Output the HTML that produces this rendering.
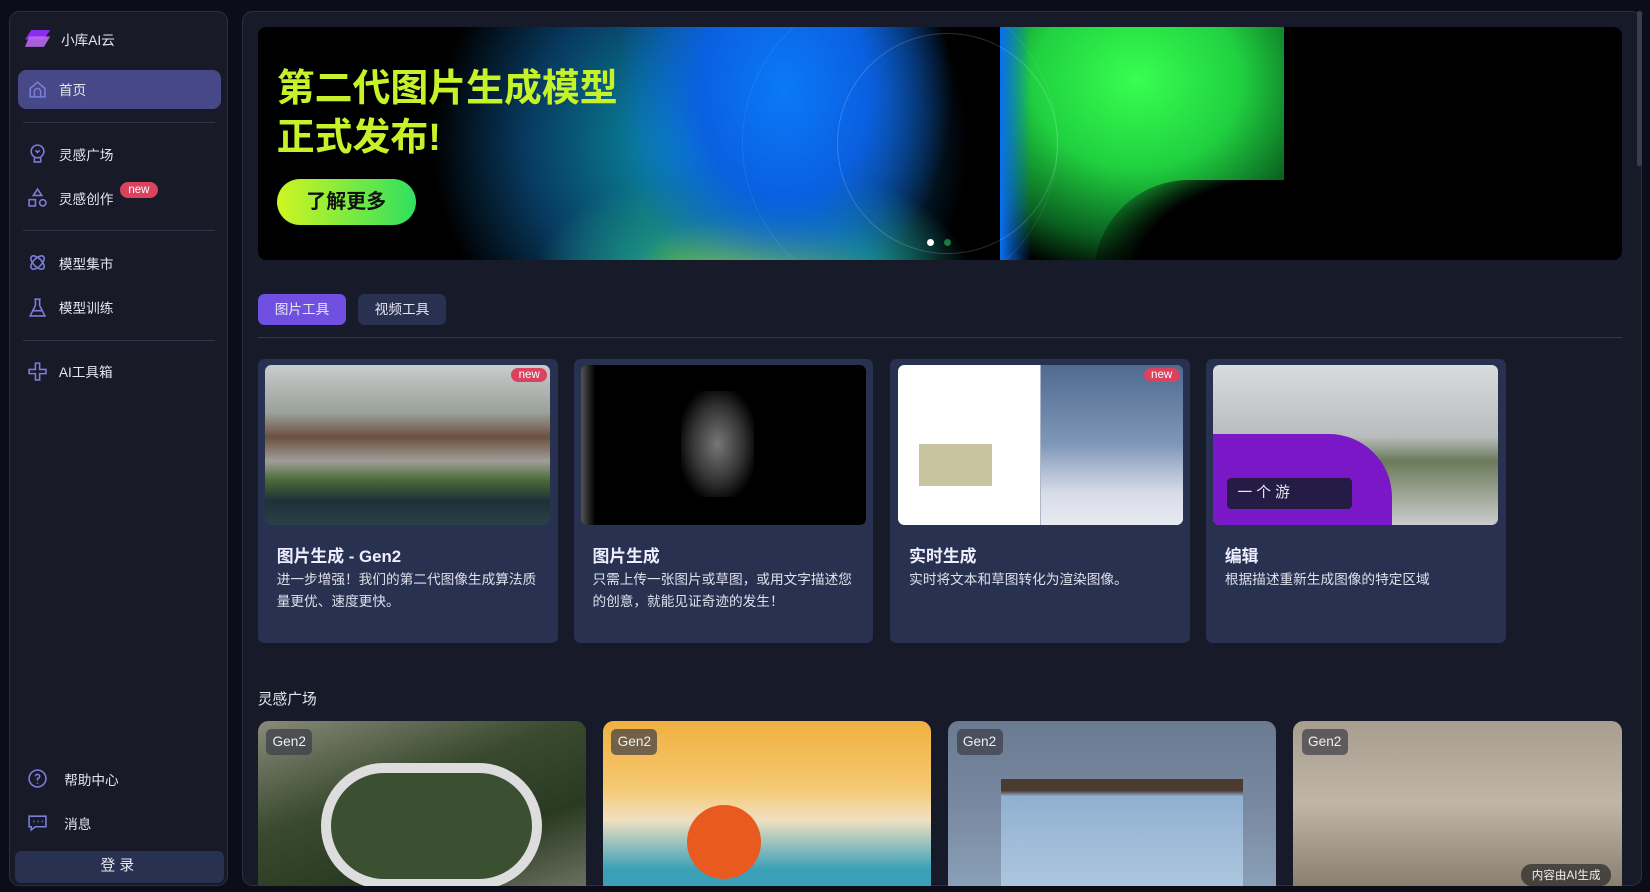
<!DOCTYPE html>
<html><head><meta charset="utf-8"><style>
*{box-sizing:border-box;margin:0;padding:0}
html,body{width:1650px;height:892px;overflow:hidden;background:#0b0d18}
#root{zoom:1.0523;position:relative;width:1568px;height:848px;font-family:"Liberation Sans","Noto Sans CJK SC",sans-serif;color:#e6e8f0}
.abs{position:absolute}
.side{left:9px;top:10px;width:208px;height:832px;background:#181a28;border:1px solid #2c2f44;border-radius:10px}
.nav{position:absolute;left:16px;font-size:13px;color:#e2e4ee;display:flex;align-items:center}
.nav svg{margin-right:10px}
.hr{position:absolute;left:22px;width:182px;height:1px;background:#303346}
.main{left:230px;top:10px;width:1330px;height:832px;background:#171a29;border:1px solid #2c2f44;border-radius:10px;overflow:hidden}
.card{position:absolute;top:341px;width:285px;height:270px;background:#283150;border-radius:6px}
.card .img{position:absolute;left:7px;top:6px;width:271px;height:152px;border-radius:6px;overflow:hidden}
.card h3{position:absolute;left:18px;top:174px;font-size:16px;font-weight:bold;color:#eef}
.card p{position:absolute;left:18px;top:200px;width:258px;font-size:13px;line-height:21px;color:#dde0ea}
.new{position:absolute;right:3px;top:3px;background:#d9435e;color:#fff;font-size:11px;padding:1px 7px;border-radius:9px}
.gal{position:absolute;top:685px;width:312px;height:157px;border-radius:10px 10px 0 0;overflow:hidden}
.gen{position:absolute;left:8px;top:8px;background:rgba(60,60,70,.7);color:#eee;font-size:13px;padding:5px 6px;border-radius:5px}
</style></head><body><div id="root">
<div class="abs side">
  <svg class="abs" style="left:14px;top:18px" width="26" height="18"><polygon points="6,0 24,0 18,9 0,9" fill="#8b2cf0"/><polygon points="4,6 24,6 18,16 0,16" fill="#c06cf8" opacity=".85"/></svg>
  <div class="abs" style="left:48px;top:17px;font-size:13px">小库AI云</div>
  <div class="abs" style="left:7px;top:56px;width:193px;height:37px;background:#474887;border-radius:8px"></div>
  <div class="nav" style="top:64px"><svg width="20" height="20" fill="none" stroke="#7b7ed8" stroke-width="1.5"><path d="M3 9L10 3l7 6v8H3z"/><path d="M7 17v-5a3 3 0 0 1 6 0v5"/></svg>首页</div>
  <div class="hr" style="top:105px;left:12px"></div>
  <div class="nav" style="top:125px"><svg width="20" height="20" fill="none" stroke="#7b7ed8" stroke-width="1.5"><circle cx="10" cy="8" r="6"/><path d="M7 14v4h6v-4M8 7l2 2 2-2"/></svg>灵感广场</div>
  <div class="nav" style="top:167px"><svg width="20" height="20" fill="none" stroke="#7b7ed8" stroke-width="1.5"><path d="M10 2l4 6H6z"/><rect x="2" y="12" width="6" height="6"/><circle cx="15" cy="15" r="3"/></svg>灵感创作</div>
  <div class="abs" style="left:104px;top:162px;background:#d9435e;color:#fff;font-size:11px;padding:2px 8px;border-radius:9px">new</div>
  <div class="hr" style="top:208px;left:12px"></div>
  <div class="nav" style="top:229px"><svg width="20" height="20" fill="none" stroke="#7b7ed8" stroke-width="1.5"><ellipse cx="10" cy="10" rx="8" ry="4" transform="rotate(45 10 10)"/><ellipse cx="10" cy="10" rx="8" ry="4" transform="rotate(-45 10 10)"/></svg>模型集市</div>
  <div class="nav" style="top:271px"><svg width="20" height="20" fill="none" stroke="#7b7ed8" stroke-width="1.5"><path d="M7 2h6M8 2v6L3 18h14L12 8V2M5 13h10"/></svg>模型训练</div>
  <div class="hr" style="top:312px;left:12px"></div>
  <div class="nav" style="top:332px"><svg width="20" height="20" fill="none" stroke="#7b7ed8" stroke-width="1.5"><path d="M8 2h4v6h6v4h-6v6H8v-6H2V8h6z"/></svg>AI工具箱</div>
  <div class="nav" style="top:719px"><svg width="20" height="20" fill="none" stroke="#7b7ed8" stroke-width="1.5"><circle cx="10" cy="10" r="8"/><path d="M8 8a2 2 0 1 1 2 2v2M10 14v1"/></svg><span style="margin-left:5px">帮助中心</span></div>
  <div class="nav" style="top:761px"><svg width="20" height="20" fill="none" stroke="#7b7ed8" stroke-width="1.5"><path d="M2 4h16v10H8l-4 3v-3H2z"/><path d="M6 9h1M10 9h1M14 9h1"/></svg><span style="margin-left:5px">消息</span></div>
  <div class="abs" style="left:4px;top:798px;width:199px;height:30px;background:#283150;border-radius:6px;text-align:center;line-height:30px;font-size:14px;letter-spacing:4px">登录</div>
</div>
<div class="abs main"></div>
<div class="abs" style="left:1556px;top:10px;width:4px;height:148px;background:#3a3d50;border-radius:2px"></div>
<div class="abs" style="left:245px;top:26px;width:1296px;height:221px;background:#000;border-radius:8px;overflow:hidden">
  <div class="abs" style="left:0;top:0;width:975px;height:221px;background:radial-gradient(ellipse 200px 260px at 500px 60px,#0a7af8 0%,#0a60e0 40%,transparent 80%),radial-gradient(ellipse 260px 140px at 470px 240px,#a8e020 0%,#1a8a80 45%,transparent 80%),radial-gradient(ellipse 300px 280px at 420px 110px,#0aa0b0 0%,#083a60 55%,transparent 85%),#000"></div>
  <div class="abs" style="left:705px;top:0;width:270px;height:221px;background:radial-gradient(ellipse 220px 190px at 130px 50px,#38ff50 0%,#20d040 45%,#0a6020 80%,#000 100%)"></div>
  <div class="abs" style="left:705px;top:0;width:30px;height:221px;background:linear-gradient(90deg,#0a70f0,transparent)"></div>
  <div class="abs" style="left:795px;top:145px;width:180px;height:90px;background:radial-gradient(ellipse 200px 130px at 180px 90px,#000 70%,transparent 100%);border-radius:100px 0 0 0"></div>
  <div class="abs" style="left:550px;top:5px;width:210px;height:210px;border:1px solid rgba(255,255,255,.18);border-radius:50%"></div>
  <div class="abs" style="left:460px;top:-40px;width:300px;height:300px;border:1px solid rgba(255,255,255,.08);border-radius:50%"></div>
  <div class="abs" style="left:18px;top:36px;font-size:36px;font-weight:bold;line-height:46px;color:#c6f22a">第二代图片生成模型<br>正式发布!</div>
  <div class="abs" style="left:18px;top:144px;width:132px;height:44px;border-radius:22px;background:linear-gradient(90deg,#d0f520,#30e060);color:#111;font-size:19px;font-weight:bold;text-align:center;line-height:44px">了解更多</div>
  <div class="abs" style="left:636px;top:201px;width:7px;height:7px;border-radius:50%;background:#fff"></div>
  <div class="abs" style="left:652px;top:201px;width:7px;height:7px;border-radius:50%;background:#1a7a40"></div>
</div>
<div class="abs" style="left:245px;top:279px;width:84px;height:30px;background:#7050e0;border-radius:6px;font-size:13px;text-align:center;line-height:30px">图片工具</div>
<div class="abs" style="left:340px;top:279px;width:84px;height:30px;background:#283150;border-radius:6px;font-size:13px;text-align:center;line-height:30px">视频工具</div>
<div class="abs" style="left:245px;top:320px;width:1296px;height:1px;background:#33374a"></div>
<div class="card" style="left:245px"><div class="img" style="background:linear-gradient(180deg,#c8cccc 0%,#9aa09a 30%,#6b5040 45%,#a09e98 60%,#4a6a38 72%,#1e3038 85%,#2a4048 100%)"><div class="new">new</div></div><h3>图片生成 - Gen2</h3><p>进一步增强！我们的第二代图像生成算法质量更优、速度更快。</p></div>
<div class="card" style="left:545px"><div class="img" style="background:linear-gradient(90deg,#555 0%,#000 5%,#000 100%)"><div class="abs" style="left:95px;top:25px;width:70px;height:100px;background:radial-gradient(ellipse at center,#777 0%,#333 50%,#000 80%)"></div></div><h3>图片生成</h3><p>只需上传一张图片或草图，或用文字描述您的创意，就能见证奇迹的发生！</p></div>
<div class="card" style="left:846px"><div class="img" style="background:linear-gradient(90deg,#fff 0%,#fff 50%,#5a7090 50%,#8aa0c0 100%)"><div class="abs" style="left:20px;top:75px;width:70px;height:40px;background:#c8c4a0"></div><div class="abs" style="left:136px;top:0;width:135px;height:152px;background:linear-gradient(180deg,#506a90 0%,#8098b8 50%,#d8dce8 80%,#e8eaf0 100%)"></div><div class="new">new</div></div><h3>实时生成</h3><p>实时将文本和草图转化为渲染图像。</p></div>
<div class="card" style="left:1146px"><div class="img" style="background:linear-gradient(180deg,#d8dcdc 0%,#b8bcbc 45%,#6a7a5a 60%,#ccc 100%)"><div class="abs" style="left:0;top:65px;width:170px;height:87px;background:#7a18c8;border-radius:0 60px 0 0"></div><div class="abs" style="left:13px;top:107px;width:119px;height:30px;background:#241c44;border-radius:4px;font-size:14px;line-height:30px;padding-left:10px">一 个 游</div></div><h3>编辑</h3><p>根据描述重新生成图像的特定区域</p></div>
<div class="abs" style="left:245px;top:654px;font-size:14px">灵感广场</div>
<div class="gal" style="left:245px;background:linear-gradient(160deg,#8a8a7a 0%,#3a4a30 40%,#2a3a22 70%,#6a7060 100%)"><div class="abs" style="left:60px;top:40px;width:210px;height:120px;border:10px solid #ddd;border-radius:60px;background:#3a5030"></div><div class="gen">Gen2</div></div>
<div class="gal" style="left:573px;background:linear-gradient(180deg,#f0b040 0%,#f5c870 40%,#f0e0c0 60%,#3aa0b8 90%)"><div class="abs" style="left:80px;top:80px;width:70px;height:70px;border-radius:50%;background:#e85a20"></div><div class="gen">Gen2</div></div>
<div class="gal" style="left:901px;background:linear-gradient(180deg,#6a7a90 0%,#7888a0 50%,#8aa0b8 100%)"><div class="abs" style="left:50px;top:55px;width:230px;height:110px;background:linear-gradient(180deg,#4a3a30 0%,#4a3a30 10%,#90b0d0 15%,#b0c8e0 100%)"></div><div class="gen">Gen2</div></div>
<div class="gal" style="left:1229px;background:linear-gradient(180deg,#a89e90 0%,#c0b6a8 50%,#8a8070 100%)"><div class="gen">Gen2</div><div class="abs" style="right:10px;bottom:0;background:rgba(40,40,40,.7);color:#eee;font-size:11px;padding:3px 10px;border-radius:10px">内容由AI生成</div></div>
</div></body></html>
